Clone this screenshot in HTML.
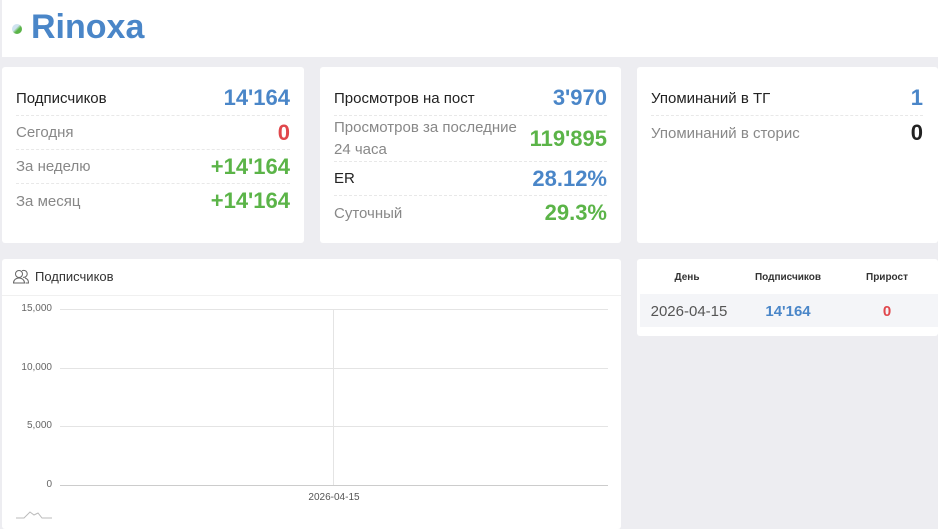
<!DOCTYPE html>
<html><head><meta charset="utf-8"><style>
*{box-sizing:border-box;margin:0;padding:0}
body{width:938px;height:523px;overflow:hidden;background:#ededf1;font-family:"Liberation Sans",sans-serif;position:relative}
.card{position:absolute;background:#fff;border-radius:3px}
.row{position:absolute;left:14px;right:14px;display:flex;justify-content:space-between;align-items:center;border-bottom:1px dashed #e8e8e8}
.row.last{border-bottom:none}
.l{font-size:15px;color:#888}
.l.b{color:#222}
.v{font-size:22px;font-weight:bold}
.blue{color:#4a86c8}.green{color:#5bb448}.red{color:#e0474c}.dark{color:#222}
.ax{position:absolute;font-size:10px;color:#666;text-align:right;width:40px;left:12px}
.gl{position:absolute;left:60px;width:548px;height:1px;background:#e4e4e4}
</style></head><body>
<div class="card" style="left:2px;top:0;width:936px;height:57px;border-radius:0">
  <div style="position:absolute;left:10px;top:24px;width:10px;height:10px;border-radius:50%;background:linear-gradient(135deg,#cfe3f0 40%,#5bb448 60%)"></div>
  <div style="position:absolute;left:29px;top:8px;font-size:34px;font-weight:bold;color:#4a86c8">Rinoxa</div>
</div>

<div class="card" style="left:2px;top:67px;width:302px;height:176px">
  <div class="row" style="top:14px;height:35px"><span class="l b">Подписчиков</span><span class="v blue">14'164</span></div>
  <div class="row" style="top:49px;height:34px"><span class="l">Сегодня</span><span class="v red">0</span></div>
  <div class="row" style="top:83px;height:34px"><span class="l">За неделю</span><span class="v green">+14'164</span></div>
  <div class="row last" style="top:117px;height:34px"><span class="l">За месяц</span><span class="v green">+14'164</span></div>
</div>

<div class="card" style="left:320px;top:67px;width:301px;height:176px">
  <div class="row" style="top:14px;height:35px"><span class="l b">Просмотров на пост</span><span class="v blue">3'970</span></div>
  <div class="row" style="top:49px;height:46px"><span class="l" style="line-height:22px;width:190px">Просмотров за последние 24 часа</span><span class="v green">119'895</span></div>
  <div class="row" style="top:95px;height:34px"><span class="l b">ER</span><span class="v blue">28.12%</span></div>
  <div class="row last" style="top:129px;height:34px"><span class="l">Суточный</span><span class="v green">29.3%</span></div>
</div>

<div class="card" style="left:637px;top:67px;width:301px;height:176px">
  <div class="row" style="top:14px;height:35px;right:15px"><span class="l b">Упоминаний в ТГ</span><span class="v blue">1</span></div>
  <div class="row last" style="top:49px;height:34px;right:15px"><span class="l">Упоминаний в сторис</span><span class="v dark">0</span></div>
</div>

<div class="card" style="left:2px;top:259px;width:619px;height:270px">
  <svg style="position:absolute;left:11px;top:10px" width="16" height="15" viewBox="0 0 16 15" fill="none" stroke="#666" stroke-width="1"><circle cx="6" cy="5" r="3.5"/><path d="M0.5 14c0-3 2.5-5 5.5-5s5.5 2 5.5 5z"/><path d="M9 1.8a3.5 3.5 0 1 1 1 6.5M12 9c2 .5 3.5 2.3 3.5 5h-3"/></svg>
  <div style="position:absolute;left:33px;top:10px;font-size:13px;color:#333">Подписчиков</div>
  <div style="position:absolute;left:0;right:0;top:36px;height:1px;background:#f0f0f0"></div>
</div>
<div class="ax" style="top:303px">15,000</div>
<div class="ax" style="top:362px">10,000</div>
<div class="ax" style="top:420px">5,000</div>
<div class="ax" style="top:479px">0</div>
<div class="gl" style="top:309px"></div>
<div class="gl" style="top:368px"></div>
<div class="gl" style="top:426px"></div>
<div class="gl" style="top:485px;background:#ccc"></div>
<div style="position:absolute;left:333px;top:309px;width:1px;height:176px;background:#e4e4e4"></div>
<div style="position:absolute;left:300px;top:492px;font-size:10px;color:#555;width:68px;text-align:center">2026-04-15</div>
<svg style="position:absolute;left:16px;top:508px" width="36" height="12" viewBox="0 0 36 12" fill="none" stroke="#bbb" stroke-width="1"><path d="M0 10h8l6-6 4 3 4-2 4 5h10"/></svg>

<div class="card" style="left:637px;top:259px;width:301px;height:77px">
  <div style="position:absolute;top:13px;left:0;width:100px;text-align:center;font-size:10px;font-weight:bold;color:#333">День</div>
  <div style="position:absolute;top:13px;left:100px;width:102px;text-align:center;font-size:10px;font-weight:bold;color:#333">Подписчиков</div>
  <div style="position:absolute;top:13px;left:200px;width:100px;text-align:center;font-size:10px;font-weight:bold;color:#333">Прирост</div>
  <div style="position:absolute;top:35px;left:3px;right:0;height:33px;background:#f4f5f8"></div>
  <div style="position:absolute;top:44px;left:0;width:104px;text-align:center;font-size:15px;color:#555">2026-04-15</div>
  <div style="position:absolute;top:44px;left:100px;width:102px;text-align:center;font-size:15px;font-weight:bold;color:#4a86c8">14'164</div>
  <div style="position:absolute;top:44px;left:200px;width:100px;text-align:center;font-size:15px;font-weight:bold;color:#e0474c">0</div>
</div>
</body></html>
